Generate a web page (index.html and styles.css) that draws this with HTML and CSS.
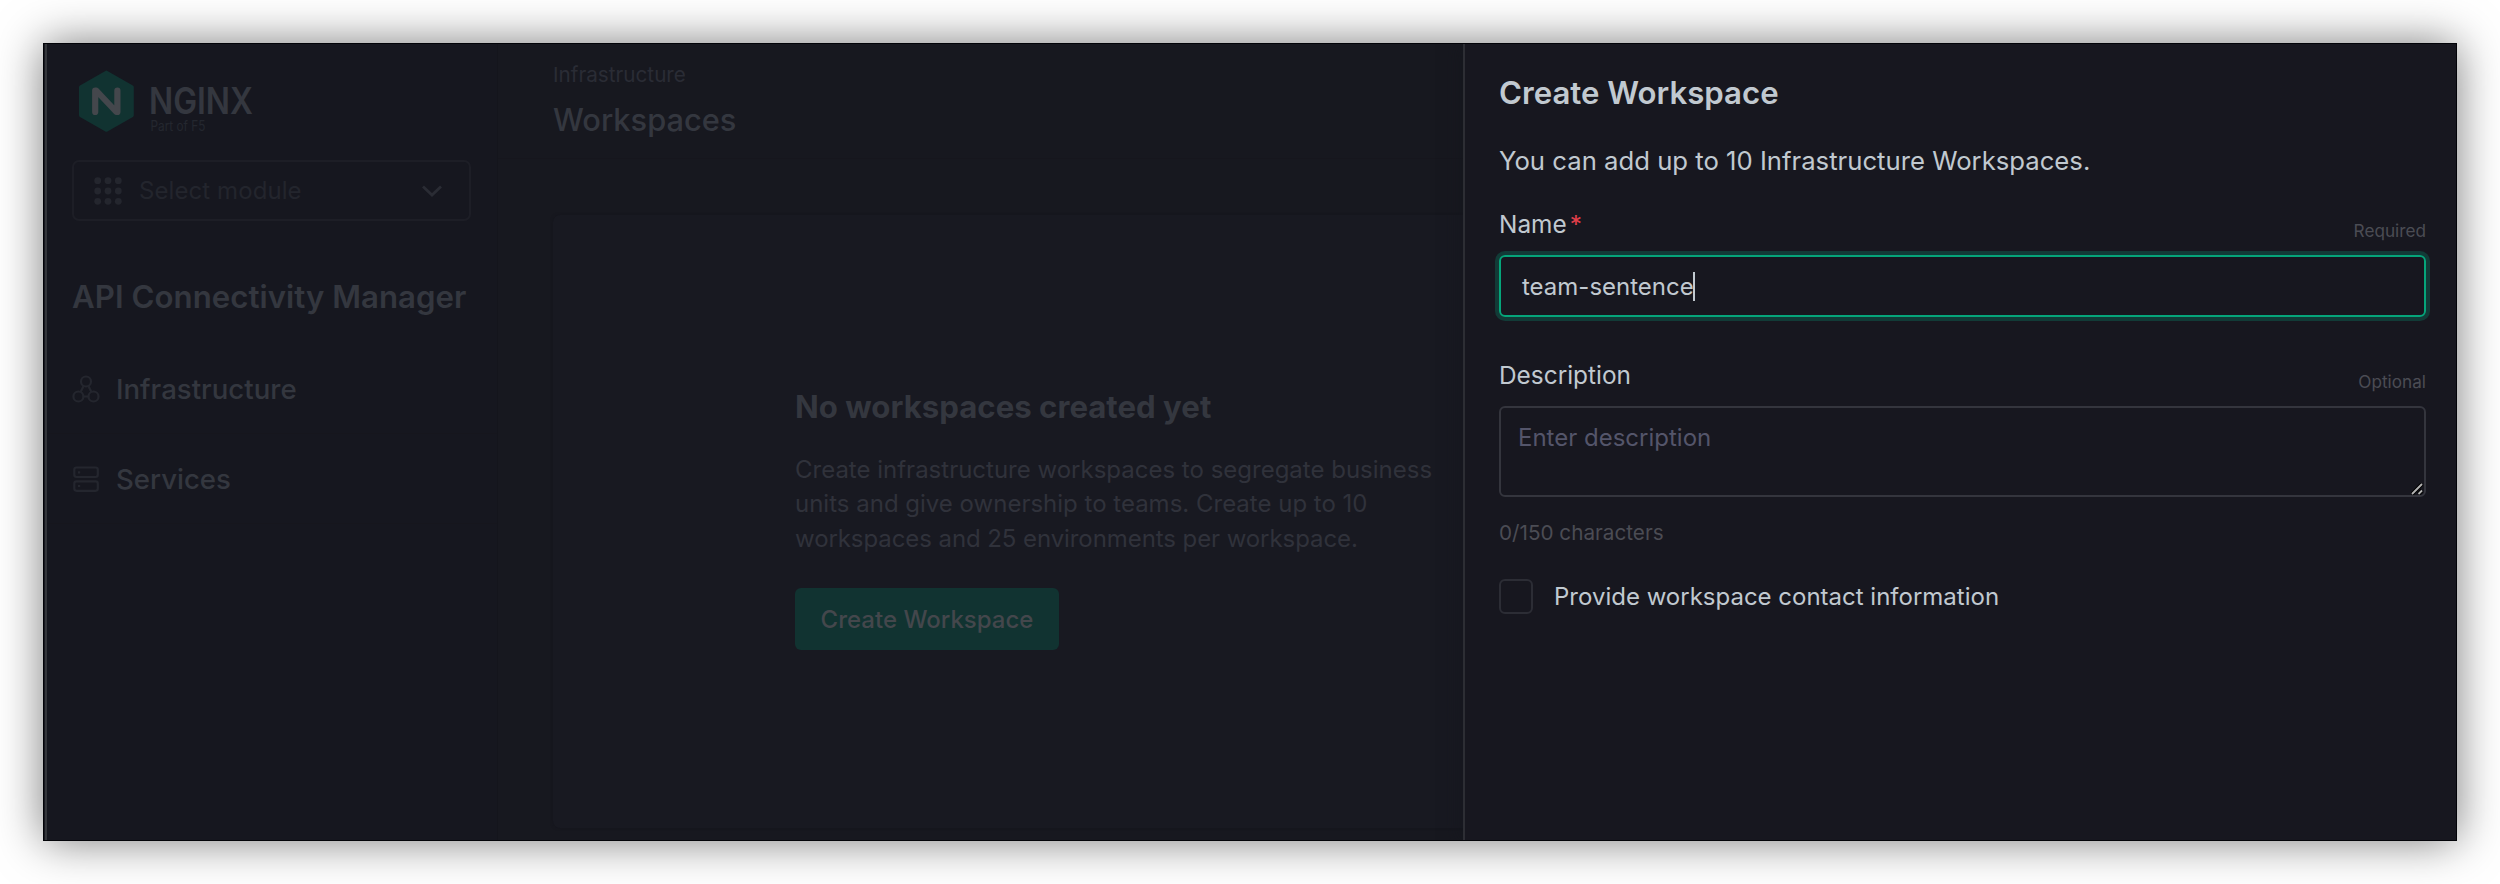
FILE: index.html
```html
<!DOCTYPE html>
<html lang="en">
<head>
<meta charset="utf-8">
<title>Create Workspace</title>
<link rel="stylesheet" href="styles.css">
</head>
<body>
<div class="window">
  <aside class="sidebar">
    <svg class="logo" width="190" height="68" viewBox="0 0 190 68">
      <path d="M26.4 .9a2 2 0 0 1 2 0L53.8 15.4a2 2 0 0 1 1 1.7V45.300a2 2 0 0 1-1 1.700L28.400 61.500a2 2 0 0 1-2 0L1 47a2 2 0 0 1-1-1.700V17.100a2 2 0 0 1 1-1.700Z" fill="#113331"/>
      <path d="M16.200 42V20.500H17.200L37.400 42H38.400V20.500" fill="none" stroke="#44474c" stroke-width="6.200" stroke-linecap="round" stroke-linejoin="round"/>
      <text class="logo-name" x="70" y="44" textLength="104" lengthAdjust="spacingAndGlyphs">NGINX</text>
      <text class="logo-sub" x="71.500" y="60.500" textLength="55" lengthAdjust="spacingAndGlyphs">Part of F5</text>
    </svg>
    <div class="select">
      <svg width="28" height="28" viewBox="0 0 28 28" fill="#24262e">
        <circle cx="3.700" cy="3.700" r="3.400"/><circle cx="14" cy="3.700" r="3.400"/><circle cx="24.300" cy="3.700" r="3.400"/>
        <circle cx="3.700" cy="14" r="3.400"/><circle cx="14" cy="14" r="3.400"/><circle cx="24.300" cy="14" r="3.400"/>
        <circle cx="3.700" cy="24.300" r="3.400"/><circle cx="14" cy="24.300" r="3.400"/><circle cx="24.300" cy="24.300" r="3.400"/>
      </svg>
      <span class="select-text">Select module</span>
      <svg width="22" height="14" viewBox="0 0 22 14"><path d="M2 2.500l9 8.500 9-8.500" fill="none" stroke="#2a2c34" stroke-width="2.800"/></svg>
    </div>
    <h1 class="product">API Connectivity Manager</h1>
    <nav class="nav">
      <a class="nav-item">
        <svg width="28" height="28" viewBox="0 0 28 28" fill="none" stroke="#24262e" stroke-width="2.200">
          <circle cx="14" cy="6.500" r="5"/><circle cx="6.400" cy="21.500" r="5"/><circle cx="21.500" cy="21.500" r="5"/>
          <path d="M11.600 11l-3 6M16.400 11l3 6M11.400 21.500h5.100"/>
        </svg>
        Infrastructure</a>
      <a class="nav-item">
        <svg width="28" height="28" viewBox="0 0 28 28" fill="none" stroke="#24262e" stroke-width="2.200">
          <rect x="2.300" y="2.500" width="23.500" height="9.500" rx="2.200"/><rect x="2.300" y="16.300" width="23.500" height="9.500" rx="2.200"/>
          <path d="M6 7.300h2.200M6 21h2.200"/>
        </svg>
        Services</a>
    </nav>
  </aside>
  <main class="main">
    <header class="header">
      <div class="crumb">Infrastructure</div>
      <h2 class="page-title">Workspaces</h2>
    </header>
    <section class="card">
      <h3 class="card-title">No workspaces created yet</h3>
      <p class="card-text">Create infrastructure workspaces to segregate business<br>units and give ownership to teams. Create up to 10<br><span class="tight">workspaces and 25 environments per workspace.</span></p>
      <button class="button">Create Workspace</button>
    </section>
  </main>
  <section class="panel">
    <h2 class="panel-title">Create Workspace</h2>
    <p class="panel-text">You can add up to 10 Infrastructure Workspaces.</p>
    <div class="label-row"><label>Name<span class="star">*</span></label><span class="hint">Required</span></div>
    <div class="input">team-sentence<span class="caret"></span></div>
    <div class="label-row second"><label>Description</label><span class="hint">Optional</span></div>
    <div class="textarea">Enter description
      <svg class="grip" width="12" height="12" viewBox="0 0 12 12"><path d="M1 11L11 1M7.500 11L11 7.500" stroke="#000" stroke-width="4"/><path d="M1 11L11 1M7.500 11L11 7.500" stroke="#b4b4b4" stroke-width="1.800"/></svg>
    </div>
    <div class="count">0/150 characters</div>
    <label class="check"><span class="box"></span>Provide workspace contact information</label>
  </section>
</div>
</body>
</html>
```
FILE: styles.css
```css
* { box-sizing: border-box; }
body { margin: 0; padding: 43px; background: #fff; font-family: Inter, sans-serif; font-size: 24px; }
h1, h2, h3, p { margin: 0; }
svg { display: block; flex: none; }

.window {
  display: flex;
  width: 2414px;
  height: 798px;
  border: 1px solid #020308;
  background: #17181f;
  box-shadow: 0 0 43px rgba(0, 0, 0, .52);
  overflow: hidden;
}

.sidebar {
  flex: none;
  width: 453px;
  margin-left: 1px;
  padding: 26px 26px 0 25px;
  border-left: 2px solid #34363b;
  border-right: 1px solid #14151c;
  background: #16171f;
}
.logo { margin-left: 7px; }
.logo-name { font-size: 36.500px; font-weight: 600; fill: #34373f; }
.logo-sub { font-size: 14px; fill: #24272f; }
.select {
  display: flex;
  align-items: center;
  width: 399px;
  height: 61px;
  margin-top: 22px;
  padding: 0 26px 0 20px;
  border: 2px solid #1d1e26;
  border-radius: 7px;
  color: #23252d;
}
.select-text { flex: 1; margin-left: 17px; letter-spacing: .08px; }
.product { margin-top: 56px; line-height: 40px; font-size: 31.200px; font-weight: 600; letter-spacing: .04px; color: #34373f; white-space: nowrap; }
.nav { margin: 27px -26px 0 -25px; }
.nav-item {
  display: flex;
  align-items: center;
  gap: 16px;
  height: 90px;
  padding-left: 25px;
  border-bottom: 1px solid #16161d;
  font-size: 27.600px;
  font-weight: 500;
  color: #34373f;
}

.main { flex: 1; min-width: 0; overflow: hidden; }
.header { height: 115px; padding: 17px 55px 0; border-bottom: 1px solid #16161d; }
.crumb { line-height: 28px; font-size: 20.700px; color: #2a2c35; }
.page-title { margin-top: 11px; line-height: 40px; font-size: 30.800px; font-weight: 500; color: #34373f; }
.card {
  width: 1000px;
  height: 613px;
  margin: 56px 0 0 55px;
  padding: 172px 0 0 242px;
  border-radius: 7px;
  background: #181921;
  box-shadow: 0 0 3px #14151c;
}
.card-title { line-height: 40px; font-size: 31.200px; font-weight: 700; color: #34373f; }
.card-text { margin-top: 26px; line-height: 34.400px; color: #30323b; white-space: nowrap; }
.tight { letter-spacing: -.08px; }
.button {
  display: block;
  width: 264px;
  height: 62px;
  margin-top: 32px;
  border: 0;
  border-radius: 6px;
  background: #113331;
  font: 500 24px Inter, sans-serif;
  color: #44474c;
}

.panel {
  flex: none;
  width: 993px;
  padding: 29px 30px 0 34px;
  border-left: 2px solid #2d2e34;
  background: #17171f;
  box-shadow: -4px 0 16px rgba(20, 22, 28, .5);
  color: #c1c9d0;
}
.panel-title { line-height: 40px; font-size: 31.200px; font-weight: 600; }
.panel-text { margin-top: 30px; line-height: 35px; font-size: 25.700px; }
.label-row { display: flex; justify-content: space-between; height: 46px; margin-top: 31px; line-height: 30px; font-size: 24.400px; }
.second { margin-top: 43px; }
.star { margin-left: 3px; color: #e23f4a; }
.hint { margin-top: 12px; line-height: 20px; font-size: 17.200px; color: #4b4c54; }
.input {
  display: flex;
  align-items: center;
  height: 62px;
  padding-left: 21px;
  border: 2px solid #05a57a;
  border-radius: 6px;
  box-shadow: 0 0 0 4px #123b37;
}
.caret { width: 2px; height: 29px; margin-left: -1px; background: #c1c9d0; }
.textarea {
  position: relative;
  height: 91px;
  padding: 15px 17px;
  border: 2px solid #34353d;
  border-radius: 6px;
  line-height: 30px;
  color: #54556a;
}
.grip { position: absolute; right: 1px; bottom: 0; }
.count { margin-top: 23px; line-height: 26px; font-size: 20.700px; color: #4b4c54; }
.check { display: flex; align-items: center; gap: 21px; height: 35px; margin-top: 33px; }
.box { width: 34px; height: 35px; border: 2px solid #2c2d35; border-radius: 6px; }
```
